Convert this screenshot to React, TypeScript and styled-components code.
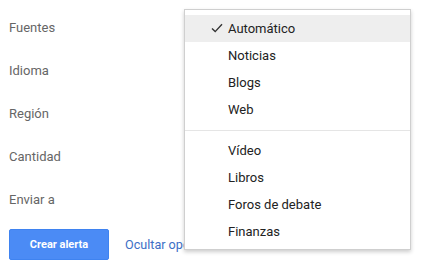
import React from 'react';
import styled, { createGlobalStyle } from 'styled-components';

const GlobalStyle = createGlobalStyle`
    html, body {
        margin : 0;
        padding : 0;
        background : #FFFFFF;
        font-family : Roboto, "Liberation Sans", Arial, sans-serif;
    }
`

const Page = styled.div`
    position : relative;
    width : 425px;
    height : 270px;
    overflow : hidden;
    padding : 6px 0px 0px 9px;
    box-sizing : border-box;
`

const Form = styled.div`
    display : flex;
    flex-direction : column;
`

const FieldRow = styled.div`
    height : 43px;
    display : flex;
    align-items : center;
`

const Label = styled.span`
    font-size : 13px;
    color : #666666;
`

const Actions = styled.div`
    display : flex;
    align-items : center;
    gap : 16px;
    margin-top : 8px;
`

const PrimaryButton = styled.button`
    width : 100px;
    height : 31px;
    border : 1px solid #3f83f0;
    border-radius : 2px;
    background-color : #4b8bf5;
    color : #FFFFFF;
    font-family : Roboto, "Liberation Sans", Arial, sans-serif;
    font-size : 11px;
    font-weight : 700;
    padding : 0;
`

const LinkText = styled.span`
    font-size : 12.6px;
    color : #3c6fc6;
    white-space : nowrap;
`

const Menu = styled.div`
    position : absolute;
    left : 184px;
    top : 9px;
    width : 227px;
    box-sizing : border-box;
    background : #FFFFFF;
    border : 1px solid #cfcfcf;
    box-shadow : 0px 2px 4px rgba(0, 0, 0, 0.2);
    padding : 5px 0px 4px 0px;
`

const MenuItem = styled.div<{ $active?: boolean }>`
    position : relative;
    height : 27px;
    display : flex;
    align-items : center;
    padding-left : 43px;
    font-size : 13px;
    color : #222222;
    background-color : ${(props) => (props.$active ? '#eeeeee' : 'transparent')};
`

const Check = styled.svg`
    position : absolute;
    left : 26px;
    top : 8px;
`

const Separator = styled.div`
    height : 1px;
    margin : 7px 0px 6px 0px;
    background-color : #e5e5e5;
`

const fields = ['Fuentes', 'Idioma', 'Región', 'Cantidad', 'Enviar a'];
const groupA = ['Automático', 'Noticias', 'Blogs', 'Web'];
const groupB = ['Vídeo', 'Libros', 'Foros de debate', 'Finanzas'];

const App = () => {
    return (
        <Page>
            <GlobalStyle />
            <Form>
                {fields.map((f) => (
                    <FieldRow key={f}>
                        <Label>{f}</Label>
                    </FieldRow>
                ))}
                <Actions>
                    <PrimaryButton>Crear alerta</PrimaryButton>
                    <LinkText>Ocultar opciones</LinkText>
                </Actions>
            </Form>
            <Menu>
                {groupA.map((item, index) => (
                    <MenuItem key={item} $active={index === 0}>
                        {index === 0 && (
                            <Check width="12" height="10" viewBox="0 0 12 10">
                                <polyline points="1,5.5 4.2,8.6 11,1.2" fill="none" stroke="#333333" strokeWidth="1.4" />
                            </Check>
                        )}
                        {item}
                    </MenuItem>
                ))}
                <Separator />
                {groupB.map((item) => (
                    <MenuItem key={item}>{item}</MenuItem>
                ))}
            </Menu>
        </Page>
    )
}

export default App;
